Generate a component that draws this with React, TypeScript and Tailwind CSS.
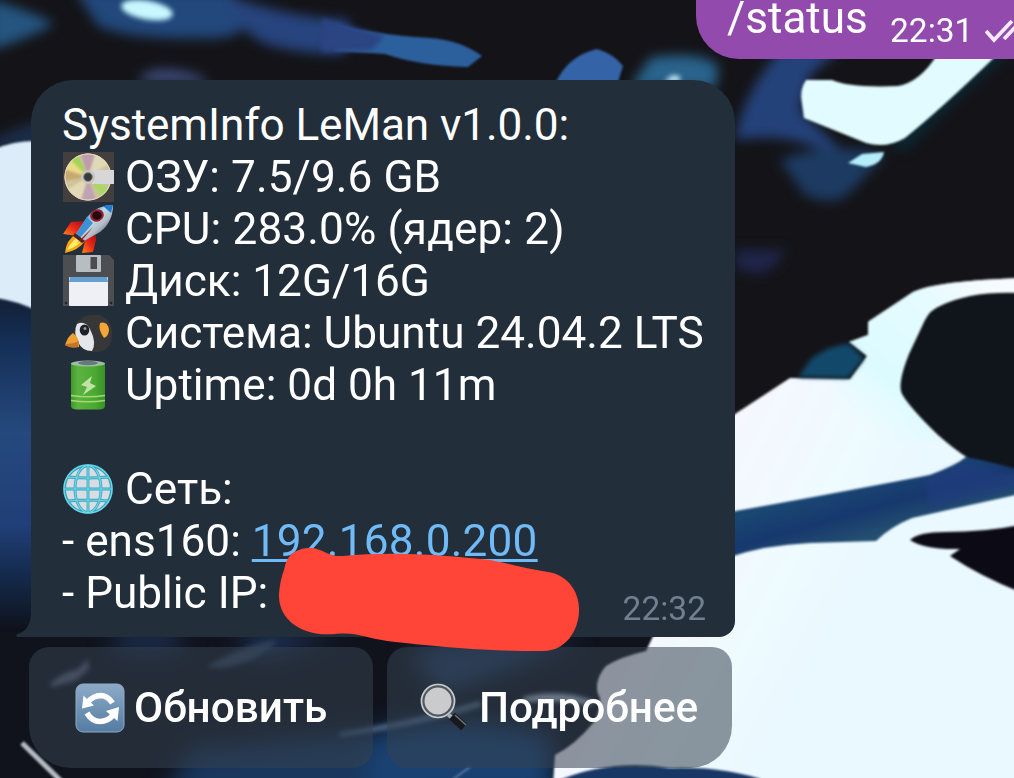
import React from "react";

function Wallpaper() {
  return (
    <svg className="absolute inset-0 h-[778px] w-[1014px]" viewBox="0 0 1014 778" aria-hidden="true">
      <defs>
        <filter id="soft" colorInterpolationFilters="sRGB"><feGaussianBlur stdDeviation="1.100" /></filter>
        <filter id="mid" colorInterpolationFilters="sRGB" filterUnits="userSpaceOnUse" x="-40" y="-40" width="1100" height="860"><feGaussianBlur stdDeviation="6" /></filter>
        <filter id="light" colorInterpolationFilters="sRGB" filterUnits="userSpaceOnUse" x="-40" y="-40" width="1100" height="860"><feGaussianBlur stdDeviation="2.500" /></filter>
        <filter id="wide" colorInterpolationFilters="sRGB" filterUnits="userSpaceOnUse" x="-40" y="560" width="760" height="300"><feGaussianBlur stdDeviation="12" /></filter>
        <linearGradient id="leftBlue" x1="0" y1="0" x2="0" y2="1">
          <stop offset="0" stopColor="#142036" />
          <stop offset=".13" stopColor="#142f56" />
          <stop offset=".4" stopColor="#25497d" />
          <stop offset=".68" stopColor="#213f78" />
          <stop offset=".82" stopColor="#152c4f" />
          <stop offset="1" stopColor="#0e111a" />
        </linearGradient>
        <linearGradient id="snow" gradientUnits="userSpaceOnUse" x1="735" y1="430" x2="900" y2="520">
          <stop offset="0" stopColor="#f6f7ff" />
          <stop offset=".6" stopColor="#eefbff" />
          <stop offset="1" stopColor="#eaf8ff" />
        </linearGradient>
        <linearGradient id="arch" gradientUnits="userSpaceOnUse" x1="860" y1="430" x2="980" y2="280">
          <stop offset="0" stopColor="#e4fcff" stopOpacity="0" />
          <stop offset=".3" stopColor="#dcfbff" />
          <stop offset=".75" stopColor="#e5fbff" />
          <stop offset="1" stopColor="#f6fbff" />
        </linearGradient>
        <linearGradient id="river" gradientUnits="userSpaceOnUse" x1="820" y1="495" x2="835" y2="548">
          <stop offset="0" stopColor="#1a4672" />
          <stop offset=".5" stopColor="#17386e" />
          <stop offset="1" stopColor="#245070" />
        </linearGradient>
      </defs>
      <rect width="1014" height="778" fill="#141418" />

      <g filter="url(#mid)">
        <path d="M-10 0 Q30 10 54 24 Q25 40 -10 50Z" fill="#255580" />
        <path d="M75 -10 H230 L250 20 Q240 40 205 38 Q130 40 98 26Z" fill="#22487c" />
        <path d="M225 -5 Q290 18 350 20 L345 54 Q290 54 262 42 Q235 28 225 -5Z" fill="#27447e" />
        <path d="M138 82 Q145 66 175 70 Q205 74 208 84Z" fill="#3c4b7a" />
        <path d="M-10 142 Q15 126 45 120 V150 H-10Z" fill="#1b2c48" />
        <path d="M780 50 Q750 85 738 125 L735 140 Q770 134 800 142 L850 158 L800 110 L810 75 L840 50Z" fill="#24427a" />
        <path d="M780 160 Q830 140 885 155 L850 192 Q835 208 805 195Z" fill="#1d3b62" />
        <path d="M735 250 H785 Q775 272 755 274 L735 268Z" fill="#20254a" />
        <path d="M650 58 Q700 50 718 66 L716 88 H630Z" fill="#2a638c" />
        <path d="M1014 55 L1000 60 Q950 105 905 150 L890 148 L990 50Z" fill="#0a2a36" />
      </g>
      <g filter="url(#soft)">
        <path d="M335 24 Q370 34 430 38 Q460 40 482 56 L468 67 Q420 66 385 54 L335 51Z" fill="#2c609d" />
      </g>
      <g filter="url(#light)">
        <path d="M322 18 Q350 26 384 36 L372 50 L322 52Z" fill="#2b4482" />
        <ellipse cx="147" cy="10" rx="26" ry="9.500" transform="rotate(10 147 10)" fill="#c8f7ff" />
        <path d="M664 82 L672 75 L680 76 V82Z" fill="#bfe8f5" />
      </g>
      <g filter="url(#soft)">
        <path d="M556 82 Q568 56 597 49 Q614 54 623 66 L618 82Z" fill="#3563a8" />
        <path d="M937 55 Q920 82 898 86 Q850 88 832 80 L806 80 Q799 90 802 104 L804 118 L866 143 Q886 149 905 138 Q940 110 1000 52 Z" fill="#e1fbff" />
        <path d="M848 163 L862 154 L884 152 Q882 164 866 167Z" fill="#b4eefa" />
        <path d="M-5 149 Q15 140 40 141 V310 H-5Z" fill="#dcecf8" />
        <path d="M-5 298 Q15 300 40 312 V632 H-5Z" fill="url(#leftBlue)" />
      </g>

      <rect x="0" y="632" width="660" height="146" fill="#10131c" />
      <g filter="url(#wide)">
        <path d="M190 748 L370 732 L420 810 H160Z" fill="#19365c" />
        <path d="M375 732 Q450 710 550 735 L555 800 H360Z" fill="#194273" />
        <path d="M410 650 L500 640 L580 642 L440 695Z" fill="#243d62" />
        <path d="M115 632 H180 V650 H115Z M235 632 H340 L260 660Z" fill="#203860" />
      </g>

      <g filter="url(#soft)">
        <path d="M735 414 L790 378 L850 379 L867 356 L849 342 L868 335 L869 321 L913 292 Q935 281 1020 278 V785 H553 L555 755 Q575 745 594 722 Q604 702 598 694 Q594 680 606 666 Q620 657 646 651 L656 630 H715 V430Z" fill="url(#snow)" />
        <path d="M868 322 L913 292 Q935 281 1020 278 V294 Q955 290 932 310 Q918 325 903 380 L906 400 L940 440 L840 450 L830 379 H850 L867 356 L849 342 L868 335Z" fill="url(#arch)" />
        <path d="M1020 293 Q970 291 940 306 Q930 310 925 320 L909 354 Q897 384 902 394 Q910 408 938 435 Q955 450 968 458 Q990 470 1020 473Z" fill="#10151b" />
        <path d="M730 512 Q810 498 930 475 Q955 466 966 457 Q992 462 1020 470 V494 Q965 506 912 518 Q890 527 876 541 L810 543 Q765 545 730 557Z" fill="url(#river)" />
      </g>
      <g filter="url(#light)">
        <path d="M798 377 L848 378 L864 358 L849 344 Q832 344 812 358Z" fill="#12496a" />
        <path d="M925 480 L967 462 Q985 468 1020 476 V488 L930 508Z" fill="#223c80" opacity=".6" />
      </g>
      <g filter="url(#soft)">
        <path d="M910 540 Q918 532 945 532 Q985 532 1020 525 V592 Q980 576 950 556 L960 549 Q925 550 910 540Z" fill="#0c0a15" />
      </g>

      <g filter="url(#light)">
        <path d="M50 684 Q62 672 78 669 L88 659 L89 669 L75 681 L52 687Z" fill="#5a5e75" />
        <path d="M206 667 Q240 646 278 640 Q255 665 220 668Z" fill="#33425a" />
        <path d="M340 733 Q410 722 480 701 L482 706 Q420 726 340 736Z" fill="#5a7596" />
        <path d="M522 698 Q560 688 596 702 L586 705 Q560 699 525 702Z" fill="#b9c8dc" />
      </g>
      <g filter="url(#soft)">
        <path d="M452 780 L470 767" stroke="#5c789c" strokeWidth="2" />
        <path d="M22 743 L61 781" stroke="#b8bdc6" strokeWidth="5" />
        <path d="M555 782 Q610 758 670 768 Q730 766 774 784 H555Z" fill="#183765" />
      </g>
    </svg>
  );
}

const iconClass = "block h-[52px] w-[52px] shrink-0";

function DiscIcon() {
  return (
    <svg viewBox="0 0 52 52" className={iconClass}>
      <defs>
        <clipPath id="discClip"><circle cx="26" cy="26" r="23.500" /></clipPath>
        <filter id="sheen" colorInterpolationFilters="sRGB"><feGaussianBlur stdDeviation="1" /></filter>
      </defs>
      <rect x="1" y="1" width="51" height="50" fill="#443f3f" />
      <circle cx="26" cy="26" r="23.500" fill="#cfc39c" />
      <g clipPath="url(#discClip)"><g filter="url(#sheen)">
        <path d="M26 26 L7 9 L15 2Z" fill="#a3d455" />
        <path d="M26 26 L0 30 L0 18Z" fill="#c7a86f" />
        <path d="M26 26 L0 17 L8 8Z" fill="#eadb86" />
        <path d="M26 26 L18 0 H34Z" fill="#bd9cab" />
        <path d="M26 26 L34 0 L48 12Z" fill="#e0d9b8" />
        <path d="M26 26 L52 40 L42 50Z" fill="#a9d767" />
        <path d="M26 26 L35 52 H18Z" fill="#bfa2b4" />
        <path d="M26 26 L18 52 L3 40Z" fill="#e3dab5" />
      </g></g>
      <circle cx="26" cy="26" r="23" fill="none" stroke="#e6ddc1" />
      <path d="M30 19 H52 V33 H30Z" fill="#d7d7d9" />
      <circle cx="26" cy="26" r="7" fill="#c9c7be" />
      <circle cx="26" cy="26" r="4.200" fill="#353a41" stroke="#706b5d" />
    </svg>
  );
}

function RocketIcon() {
  return (
    <svg viewBox="0 0 52 52" className={iconClass}>
      <defs>
        <linearGradient id="hull" x1=".2" y1=".2" x2=".8" y2=".8">
          <stop stopColor="#277ac6" /><stop offset=".4" stopColor="#b9dcf1" /><stop offset=".7" stopColor="#b5bdc5" /><stop offset="1" stopColor="#596f83" />
        </linearGradient>
        <linearGradient id="fin" x1="1" y1="0" x2="0" y2="1">
          <stop stopColor="#a50e16" /><stop offset=".5" stopColor="#ed2b17" /><stop offset="1" stopColor="#ff8a1e" />
        </linearGradient>
      </defs>
      <path d="M22 18 L9 19 L1 31 L15 33Z" fill="url(#fin)" />
      <path d="M34 32 L34 37 L31 49 L20 50 L24 34Z" fill="url(#fin)" />
      <path d="M14 31 Q4 37 3 50 Q17 47 23 38Z" fill="#f8a719" />
      <path d="M15 34 Q7 42 5 47 Q15 44 19 38Z" fill="#ffed66" />
      <path d="M51 2 Q35 2 25 14 L14 31 L22 38 L38 29 Q51 19 51 2Z" fill="url(#hull)" />
      <path d="M25 14 L14 31 L18 35 L31 20Z" fill="#3c91d5" />
      <path d="M41 3 Q47 2 51 2 L49 10Z" fill="#237bcf" />
      <path d="M13 30 L23 38 L20 40 L11 33Z" fill="#46222c" />
      <path d="M31 24 L15 40 L22 35Z" fill="#b6161b" />
      <ellipse cx="35" cy="12.500" rx="7" ry="6" transform="rotate(-25 35 12.500)" fill="#a3202a" />
      <ellipse cx="35" cy="12.500" rx="4.800" ry="4.200" fill="#22090f" />
    </svg>
  );
}

function FloppyIcon() {
  return (
    <svg viewBox="0 0 52 52" className={iconClass}>
      <path d="M1 0 H47 L52 5 V51 H1Z" fill="#4c4e51" />
      <rect x="14" y="0" width="25" height="17" rx="1" fill="#b8bdc1" />
      <rect x="28.500" y="2" width="6.500" height="12" fill="#4a4c50" />
      <rect x="7" y="22" width="39" height="29" rx="1" fill="#eef0f5" />
      <path d="M8 22 H45 L46 27 H7Z" fill="#65a0d3" />
      <circle cx="4" cy="48" r="1.300" fill="#202327" /><circle cx="49" cy="48" r="1.300" fill="#202327" />
    </svg>
  );
}

function PenguinIcon() {
  return (
    <svg viewBox="0 0 52 52" className={iconClass}>
      <path d="M15 15 Q23 6 37 8 Q50 12 50 28 Q50 41 40 44 Q27 48 17 38 Q9 28 15 15Z" fill="#373738" />
      <path d="M15 17 Q23 13 28 22 Q35 36 30 44 Q20 44 16 35 Q11 25 15 17Z" fill="#e4e6eb" />
      <path d="M11 26 Q18 31 17 40 Q9 41 3 38 Q6 29 11 26Z" fill="#eea037" />
      <path d="M3 37 Q11 37 17 34 L16 40 Q8 42 3 38Z" fill="#c67428" />
      <ellipse cx="22.500" cy="23" rx="4.800" ry="5.500" fill="#1e2226" />
      <circle cx="23" cy="21.500" r="1.500" fill="#8d969e" />
      <path d="M38 16 Q45 14 47 22 Q47 29 42 31 Q36 23 38 16Z" fill="#f3a536" />
    </svg>
  );
}

function BatteryIcon() {
  return (
    <svg viewBox="0 0 52 52" className={iconClass}>
      <defs><linearGradient id="cell"><stop stopColor="#3d9a26" /><stop offset=".2" stopColor="#5db341" /><stop offset=".7" stopColor="#4aaa30" /><stop offset="1" stopColor="#389228" /></linearGradient></defs>
      <path d="M9 4 H43 V47 Q43 50 38 50.500 H14 Q9 50 9 47Z" fill="url(#cell)" />
      <ellipse cx="26" cy="4.500" rx="17" ry="3" fill="#9fbda4" />
      <ellipse cx="26" cy="4" rx="10" ry="2.200" fill="#65797f" />
      <path d="M19 26 L30 17 L28 24 L34 27 L21 36 L25 28Z" fill="#bfe3a6" />
      <path d="M9 36.500 Q26 39 43 36.500 M9 41.500 Q26 44 43 41.500" stroke="#a5d877" strokeWidth="1.500" fill="none" />
    </svg>
  );
}

function GlobeIcon() {
  return (
    <svg viewBox="0 0 52 52" className={iconClass}>
      <circle cx="26" cy="26" r="24" fill="#d9dce3" />
      <g fill="none" stroke="#35a5bd" strokeWidth="2.800">
        <circle cx="26" cy="26" r="23.500" /><ellipse cx="26" cy="26" rx="13" ry="23.500" />
        <path d="M26 2 V50 M2 26 H50 M6 14 Q26 16 46 14 M6 38 Q26 36 46 38" />
      </g>
      <g fill="none" stroke="#72d9e8" strokeWidth="1.200">
        <circle cx="26" cy="26" r="24" /><ellipse cx="26" cy="26" rx="13" ry="23.500" />
        <path d="M26 2 V50 M2 26 H50 M6 14 Q26 16 46 14 M6 38 Q26 36 46 38" />
      </g>
    </svg>
  );
}

function RefreshIcon() {
  return (
    <svg viewBox="0 0 52 52" className={iconClass}>
      <defs><linearGradient id="tile" x1="0" y1="0" x2="0" y2="1"><stop stopColor="#8dabc8" /><stop offset="1" stopColor="#547ca2" /></linearGradient></defs>
      <rect x="2" y="2" width="48" height="48" rx="7" fill="url(#tile)" stroke="#8fabc6" />
      <path d="M13 21 Q19 13.500 27 13.500 Q34 14 38.500 21" fill="none" stroke="#fff" strokeWidth="5.500" />
      <path d="M8 26.500 L9.500 13.500 L13 17 L20 23.500Z" fill="#fff" />
      <path d="M13 31 Q18 39.500 26 39.500 Q34 39.500 39 33" fill="none" stroke="#fff" strokeWidth="5.500" />
      <path d="M45 25 L43.500 39 L40 36 L32 29Z" fill="#fff" />
    </svg>
  );
}

function SearchIcon() {
  return (
    <svg viewBox="0 0 52 52" className={iconClass}>
      <path d="M31 31 L37 35 L34 39 L29 34Z" fill="#aaafb1" />
      <path d="M34 34 L46 45" stroke="#17191c" strokeWidth="8.500" />
      <path d="M37 33 L48 43" stroke="#6c7379" strokeWidth="1.500" />
      <circle cx="20" cy="19" r="15.500" fill="#c9cbcd" stroke="#51575c" strokeWidth="4" />
      <circle cx="20" cy="19" r="16.500" fill="none" stroke="#c5cbcf" strokeWidth="1.700" />
    </svg>
  );
}

function Row({ icon, className, children }: { icon?: React.ReactNode; className?: string; children?: React.ReactNode }) {
  return (
    <div className="flex h-[52px] items-center whitespace-pre">
      {icon && <span className="mr-[11px]">{icon}</span>}
      <span className={className}>{children}</span>
    </div>
  );
}

export default function App() {
  return (
    <div className="relative h-[778px] w-[1014px] overflow-hidden bg-[#141418] font-['Roboto',sans-serif] text-white">
      <Wallpaper />
      <main className="relative flex flex-col">
        <div className="ml-[696px] flex h-[59px] w-[318px] items-start overflow-hidden rounded-bl-[43px] bg-[#934aad] pl-[31px]">
          <span className="w-[163px] shrink-0 text-[44.1px] leading-[36px]">/status</span>
          <time className="mt-[11px] w-[95px] shrink-0 text-[33.5px] leading-[39px]">22:31</time>
          <svg viewBox="0 0 40 24" className="mt-[19px] h-[24px] w-[40px] shrink-0" fill="none" stroke="#f5eaff" strokeWidth="3.800">
            <path d="M1 12 L9 21 L27 2 M19 20 L38 0" />
          </svg>
        </div>

        <section className="relative mt-[21px] ml-[31px] flex h-[557px] w-[704px] flex-col rounded-t-[42px] rounded-br-[16px] bg-[#222e3a] pt-[19px] pl-[31px] text-[44.15px] leading-[52px]">
          <svg viewBox="0 0 16 22" className="absolute bottom-0 -left-[15px] h-[22px] w-[16px]">
            <path d="M15 0 H16 V22 H1 Q0 21 1 19 Q13 17 15 0Z" fill="#222e3a" />
          </svg>
          <Row className="tracking-[-0.08px]">SystemInfo LeMan v1.0.0:</Row>
          <Row icon={<DiscIcon />} className="tracking-[0.08px]">ОЗУ: 7.5/9.6 GB</Row>
          <Row icon={<RocketIcon />} className="tracking-[0.13px]">CPU: 283.0% (ядер: 2)</Row>
          <Row icon={<FloppyIcon />}>Диск: 12G/16G</Row>
          <Row icon={<PenguinIcon />}>Система: Ubuntu 24.04.2 LTS</Row>
          <Row icon={<BatteryIcon />}>Uptime: 0d 0h 11m</Row>
          <Row />
          <Row icon={<GlobeIcon />}>Сеть:</Row>
          <Row>- ens160: <a className="tracking-[0.22px] text-[#70bbf7] underline decoration-[2.5px] underline-offset-[3px] [text-decoration-skip-ink:none]">192.168.0.200</a></Row>
          <Row>- Public IP:</Row>
          <time className="absolute right-[29px] bottom-[9px] text-[33.5px] leading-[39px] text-[#71808f]">22:32</time>
          <svg viewBox="278 546 304 108" className="absolute top-[466px] left-[247px] z-10 h-[108px] w-[304px]">
            <path d="M284 570 Q287 550 307 548 C323 547 326 557 343 556 C390 551 445 555 490 560 C515 565 528 569 548 572 C568 575 580 592 579 612 C578 632 565 651 543 651 C490 652 421 645 387 641 C365 638 358 632 335 634 C302 637 278 620 279 594 Q280 580 284 570Z" fill="#ff4438" />
          </svg>
        </section>

        <div className="mt-[10px] ml-[29px] flex gap-[14px] text-[42.3px] leading-[46px] font-medium">
          <button className="flex h-[121px] w-[344px] items-center rounded-[20px] rounded-bl-[42px] bg-[#344250]/55 pl-[45px]">
            <RefreshIcon />
            <span className="ml-[8px]">Обновить</span>
          </button>
          <button className="flex h-[121px] w-[345px] items-center rounded-[20px] rounded-br-[42px] bg-[#344250]/55 pl-[31px]">
            <SearchIcon />
            <span className="ml-[9px]">Подробнее</span>
          </button>
        </div>
      </main>
    </div>
  );
}
